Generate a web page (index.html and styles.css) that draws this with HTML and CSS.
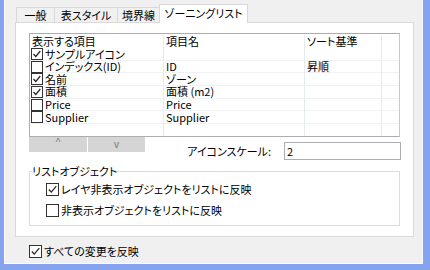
FILE: index.html
```html
<!DOCTYPE html>
<html lang="ja">
<head>
  <meta charset="UTF-8">
  <link rel="stylesheet" href="styles.css">
  <title>ゾーニングリスト</title>
</head>
<body>

  <div class="window">
    <div class="tabs">
      <div class="tab t1">一般</div>
      <div class="tab t2">表スタイル</div>
      <div class="tab t3">境界線</div>
      <div class="tab active">ゾーニングリスト</div>
    </div>

    <div class="panel">
      <div class="list">
        <div class="row head">
          <span>表示する項目</span><span>項目名</span><span>ソート基準</span><span></span>
        </div>
        <div class="row">
          <span class="item"><svg class="cb" viewBox="0 0 12 12"><rect x=".5" y=".5" width="11" height="11"/><path d="M2.5 6l2.3 2.5 4.5-5.5"/></svg>サンプルアイコン</span><span></span><span></span><span></span>
        </div>
        <div class="row">
          <span class="item"><svg class="cb" viewBox="0 0 12 12"><rect x=".5" y=".5" width="11" height="11"/></svg>インデックス(ID)</span><span>ID</span><span>昇順</span><span></span>
        </div>
        <div class="row">
          <span class="item"><svg class="cb" viewBox="0 0 12 12"><rect x=".5" y=".5" width="11" height="11"/><path d="M2.5 6l2.3 2.5 4.5-5.5"/></svg>名前</span><span>ゾーン</span><span></span><span></span>
        </div>
        <div class="row">
          <span class="item"><svg class="cb" viewBox="0 0 12 12"><rect x=".5" y=".5" width="11" height="11"/><path d="M2.5 6l2.3 2.5 4.5-5.5"/></svg>面積</span><span>面積 (m2)</span><span></span><span></span>
        </div>
        <div class="row">
          <span class="item"><svg class="cb" viewBox="0 0 12 12"><rect x=".5" y=".5" width="11" height="11"/></svg>Price</span><span>Price</span><span></span><span></span>
        </div>
        <div class="row">
          <span class="item"><svg class="cb" viewBox="0 0 12 12"><rect x=".5" y=".5" width="11" height="11"/></svg>Supplier</span><span>Supplier</span><span></span><span></span>
        </div>
        <div class="row fill">
          <span></span><span></span><span></span><span></span>
        </div>
      </div>

      <div class="controls">
        <div class="arrows">
          <button class="up">^</button>
          <button class="down">v</button>
        </div>
        <div class="scale">
          <span>アイコンスケール:</span>
          <input type="text" value="2">
        </div>
      </div>

      <fieldset class="group">
        <legend>リストオブジェクト</legend>
        <div class="opt"><svg class="cb big" viewBox="0 0 13 13"><rect x=".5" y=".5" width="12" height="12"/><path d="M2.8 6.5l2.5 2.7 5-6"/></svg>レイヤ非表示オブジェクトをリストに反映</div>
        <div class="opt"><svg class="cb big" viewBox="0 0 13 13"><rect x=".5" y=".5" width="12" height="12"/></svg>非表示オブジェクトをリストに反映</div>
      </fieldset>
    </div>

    <div class="footer">
      <div class="opt"><svg class="cb big" viewBox="0 0 13 13"><rect x=".5" y=".5" width="12" height="12"/><path d="M2.8 6.5l2.5 2.7 5-6"/></svg>すべての変更を反映</div>
    </div>
  </div>

</body>
</html>
```

FILE: styles.css
```css
body {
  margin: 0;
  background-color: #86a3ef;
  font-family: "Noto Sans CJK JP", sans-serif;
  font-size: 11px;
  font-feature-settings: "palt";
  line-height: 13px;
  color: #000;
}

.window {
  box-sizing: border-box;
  height: 264px;
  margin: 0 7px 0 4px;
  background-color: #f0f0f0;
  border: 1px solid #fbfbfb;
  border-top: none;
}

/* tab strip */
.tabs {
  display: flex;
  align-items: flex-end;
  height: 22px;
  padding-left: 11px;
}

.tab {
  box-sizing: border-box;
  height: 15px;
  margin-right: -1px;
  border: 1px solid #d9d9d9;
  border-bottom: none;
  background-color: #f0f0f0;
  text-align: center;
  line-height: 14px;
}

.t1 { width: 39px; }
.t2 { width: 64px; }
.t3 { width: 43px; }

.tab.active {
  position: relative;
  z-index: 1;
  width: 89px;
  height: 19px;
  margin-bottom: -1px;
  background-color: #fff;
  line-height: 17px;
}

.panel {
  box-sizing: border-box;
  height: 215px;
  margin: 0 8px 0 10px;
  padding: 10px 13px 0 13px;
  background-color: #fff;
  border: 1px solid #d9d9d9;
}

/* item list */
.list {
  box-sizing: border-box;
  display: flex;
  flex-direction: column;
  height: 104px;
  border: 1px solid #adadad;
  border-right-color: #c9c9c9;
}

.row {
  box-sizing: border-box;
  display: grid;
  grid-template-columns: 134px 141px 77px 1fr;
  height: 12.67px;
  border-bottom: 1px solid #eff1f4;
  line-height: 11px;
}

.row span {
  display: flex;
  align-items: center;
  padding-left: 2px;
  border-right: 1px solid #e4eaf0;
  white-space: nowrap;
}

.row span:last-child {
  border-right: none;
}

.row .item {
  padding-left: 1px;
}

.row.head {
  height: 14px;
  border-bottom: none;
  padding-top: 1px;
}

.row.fill {
  flex: 1;
  border-bottom: none;
}

.cb {
  flex: none;
  width: 12px;
  height: 12px;
  margin-right: 2px;
}

.cb.big {
  width: 13px;
  height: 13px;
}

.cb rect {
  fill: #fff;
  stroke: #333;
}

.cb path {
  fill: none;
  stroke: #222;
  stroke-width: 1.2;
}

/* buttons + scale */
.controls {
  display: flex;
  align-items: flex-start;
}

.arrows {
  display: flex;
  gap: 1px;
}

.arrows button {
  width: 58px;
  height: 15px;
  padding: 0;
  border: none;
  background-color: #d5d5d5;
  color: #7a7a7a;
  font-family: "Liberation Sans", sans-serif;
  font-size: 10px;
}

.arrows .up {
  line-height: 8px;
  padding-bottom: 4px;
}

.arrows .down {
  width: 57px;
  line-height: 15px;
}

.scale {
  display: flex;
  align-items: center;
  margin: 5px 0 0 auto;
}

.scale span {
  margin-right: 13px;
}

.scale input {
  box-sizing: border-box;
  width: 117px;
  height: 18px;
  margin: 0 -1px 0 0;
  padding: 0 2px;
  border: 1px solid #abadb3;
  font: inherit;
  outline: none;
}

/* group box */
.group {
  margin: 4px 0 0 0;
  padding: 5px 0 8px 0;
  border: 1px solid #dcdcdc;
  display: flex;
  flex-direction: column;
  gap: 8px;
}

.group legend {
  margin-left: 2px;
  padding: 0;
  line-height: 14px;
}

.opt {
  display: flex;
  align-items: center;
  height: 13px;
}

.group .opt {
  margin-left: 16px;
}

.footer {
  padding: 8px 0 0 24px;
}
```
